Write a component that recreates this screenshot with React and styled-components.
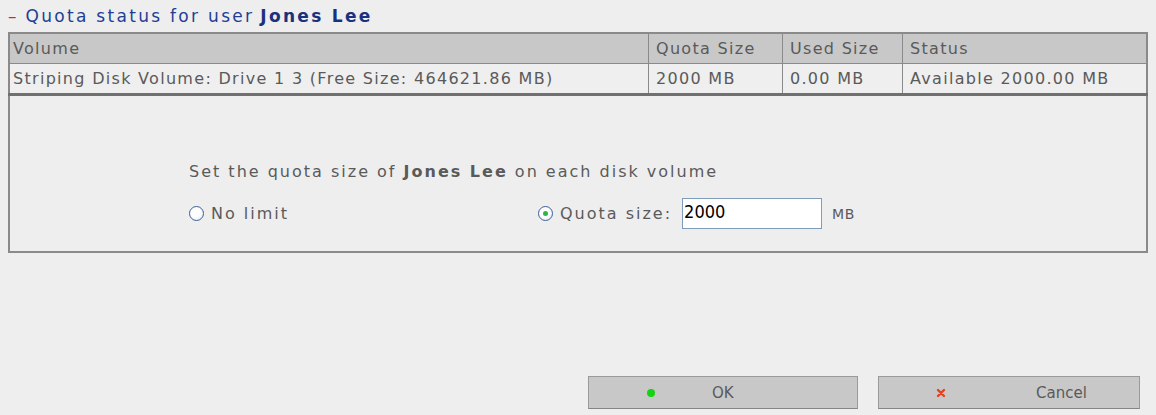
import React from 'react';
import styled, { createGlobalStyle } from 'styled-components';

const GlobalStyle = createGlobalStyle`
  html, body {
    margin: 0;
    padding: 0;
    background: #eeeeee;
  }
  body {
    font-family: "DejaVu Sans", Verdana, sans-serif;
    color: #5a5a5a;
  }
`;

const Page = styled.div`
  width: 1156px;
  height: 415px;
  box-sizing: border-box;
  padding: 0 8px;
  display: flex;
  flex-direction: column;
`;

const Title = styled.div`
  font-size: 17px;
  letter-spacing: 2.3px;
  color: #1f3f96;
  height: 32px;
  display: flex;
  align-items: center;
  gap: 9px;

  b {
    color: #1a317e;
    margin-left: 6px;
  }
`;

const Minus = styled.span`
  color: #e02020;
  letter-spacing: 0;
`;

const Table = styled.table`
  width: 100%;
  border-collapse: collapse;
  border: 2px solid #8a8a8a;
  font-size: 16px;
  letter-spacing: 1.3px;
`;

const HeadCell = styled.th`
  background: #c8c8c8;
  font-weight: normal;
  text-align: left;
  color: #5a5a5a;
  height: 29px;
  padding: ${p => (p.$first ? '0 3px' : '0 5px 0 7px')};
  border: 1px solid #8a8a8a;
  width: ${p => p.$w || 'auto'};
`;

const Cell = styled.td`
  background: #efefef;
  height: 29px;
  padding: ${p => (p.$first ? '0 3px' : '0 5px 0 7px')};
  border: 1px solid #8a8a8a;
  border-bottom: 3px solid #707070;
  white-space: nowrap;
`;

const FormBox = styled.div`
  border: 2px solid #8a8a8a;
  border-top: none;
  height: 157px;
  box-sizing: border-box;
  padding: 67px 0 0 179px;
  font-size: 16px;
  letter-spacing: 2px;
  display: flex;
  flex-direction: column;
  gap: 17px;
`;

const Row = styled.div`
  display: flex;
  align-items: center;
  line-height: 18px;
`;

const Option = styled.label`
  display: flex;
  align-items: center;
  gap: 7px;
  width: ${p => p.$w || 'auto'};
`;

const Radio = styled.span`
  width: 15px;
  height: 15px;
  border-radius: 50%;
  border: 1.5px solid #3d5f98;
  background: radial-gradient(circle at 40% 40%, #ffffff 40%, #dfe4ea 100%);
  box-sizing: border-box;
  display: flex;
  align-items: center;
  justify-content: center;
  flex-shrink: 0;

  &::after {
    content: "";
    width: 5px;
    height: 5px;
    border-radius: 50%;
    background: ${p => (p.$checked ? '#2cb54a' : 'transparent')};
  }
`;

const Input = styled.input`
  width: 140px;
  height: 31px;
  box-sizing: border-box;
  border: 1px solid #7f9db9;
  background: #fff;
  font-family: "DejaVu Sans Condensed", "DejaVu Sans", sans-serif;
  font-size: 18px;
  letter-spacing: 0;
  color: #000;
  padding: 0 1px 4px;
  margin-left: 10px;
  outline: none;
`;

const Unit = styled.span`
  margin-left: 10px;
  font-size: 14px;
  letter-spacing: 0.5px;
`;

const ButtonBar = styled.div`
  margin-top: auto;
  margin-bottom: 6px;
  display: flex;
  justify-content: flex-end;
  gap: 20px;
  padding-right: 8px;
`;

const Button = styled.button`
  width: ${p => p.$w};
  height: 33px;
  background: #c8c8c8;
  border: 1px solid #9a9a9a;
  border-bottom-color: #858585;
  font-family: "DejaVu Sans", Verdana, sans-serif;
  font-size: 15px;
  color: #5a5a5a;
  display: flex;
  align-items: center;
  padding: 0;
  cursor: pointer;
`;

const Icon = styled.span`
  width: 67px;
  display: flex;
  justify-content: flex-end;
  align-items: center;
`;

const Label = styled.span`
  padding-left: ${p => p.$pl};
`;

const Dot = styled.span`
  width: 8px;
  height: 8px;
  margin-right: 1px;
  border-radius: 50%;
  background: #14d214;
`;

export default function App() {
  return (
    <>
      <GlobalStyle />
      <Page>
        <Title>
          <Minus>–</Minus>
          <span>
            Quota status for user<b>Jones Lee</b>
          </span>
        </Title>
        <Table>
          <thead>
            <tr>
              <HeadCell $first>Volume</HeadCell>
              <HeadCell $w="121px">Quota Size</HeadCell>
              <HeadCell $w="107px">Used Size</HeadCell>
              <HeadCell $w="231px">Status</HeadCell>
            </tr>
          </thead>
          <tbody>
            <tr>
              <Cell $first>Striping Disk Volume: Drive 1 3 (Free Size: 464621.86 MB)</Cell>
              <Cell>2000 MB</Cell>
              <Cell>0.00 MB</Cell>
              <Cell>Available 2000.00 MB</Cell>
            </tr>
          </tbody>
        </Table>
        <FormBox>
          <Row>
            Set the quota size of&nbsp;<b>Jones Lee</b>&nbsp;on each disk volume
          </Row>
          <Row>
            <Option $w="349px">
              <Radio />
              No limit
            </Option>
            <Option>
              <Radio $checked />
              Quota size:
            </Option>
            <Input defaultValue="2000" />
            <Unit>MB</Unit>
          </Row>
        </FormBox>
        <ButtonBar>
          <Button $w="270px">
            <Icon>
              <Dot />
            </Icon>
            <Label $pl="56px">OK</Label>
          </Button>
          <Button $w="262px">
            <Icon>
              <svg width="10" height="10" viewBox="0 0 10 10">
                <path d="M2 2 L8 8 M8 2 L2 8" stroke="#e8401c" strokeWidth="2.4" strokeLinecap="round" />
              </svg>
            </Icon>
            <Label $pl="90px">Cancel</Label>
          </Button>
        </ButtonBar>
      </Page>
    </>
  );
}
